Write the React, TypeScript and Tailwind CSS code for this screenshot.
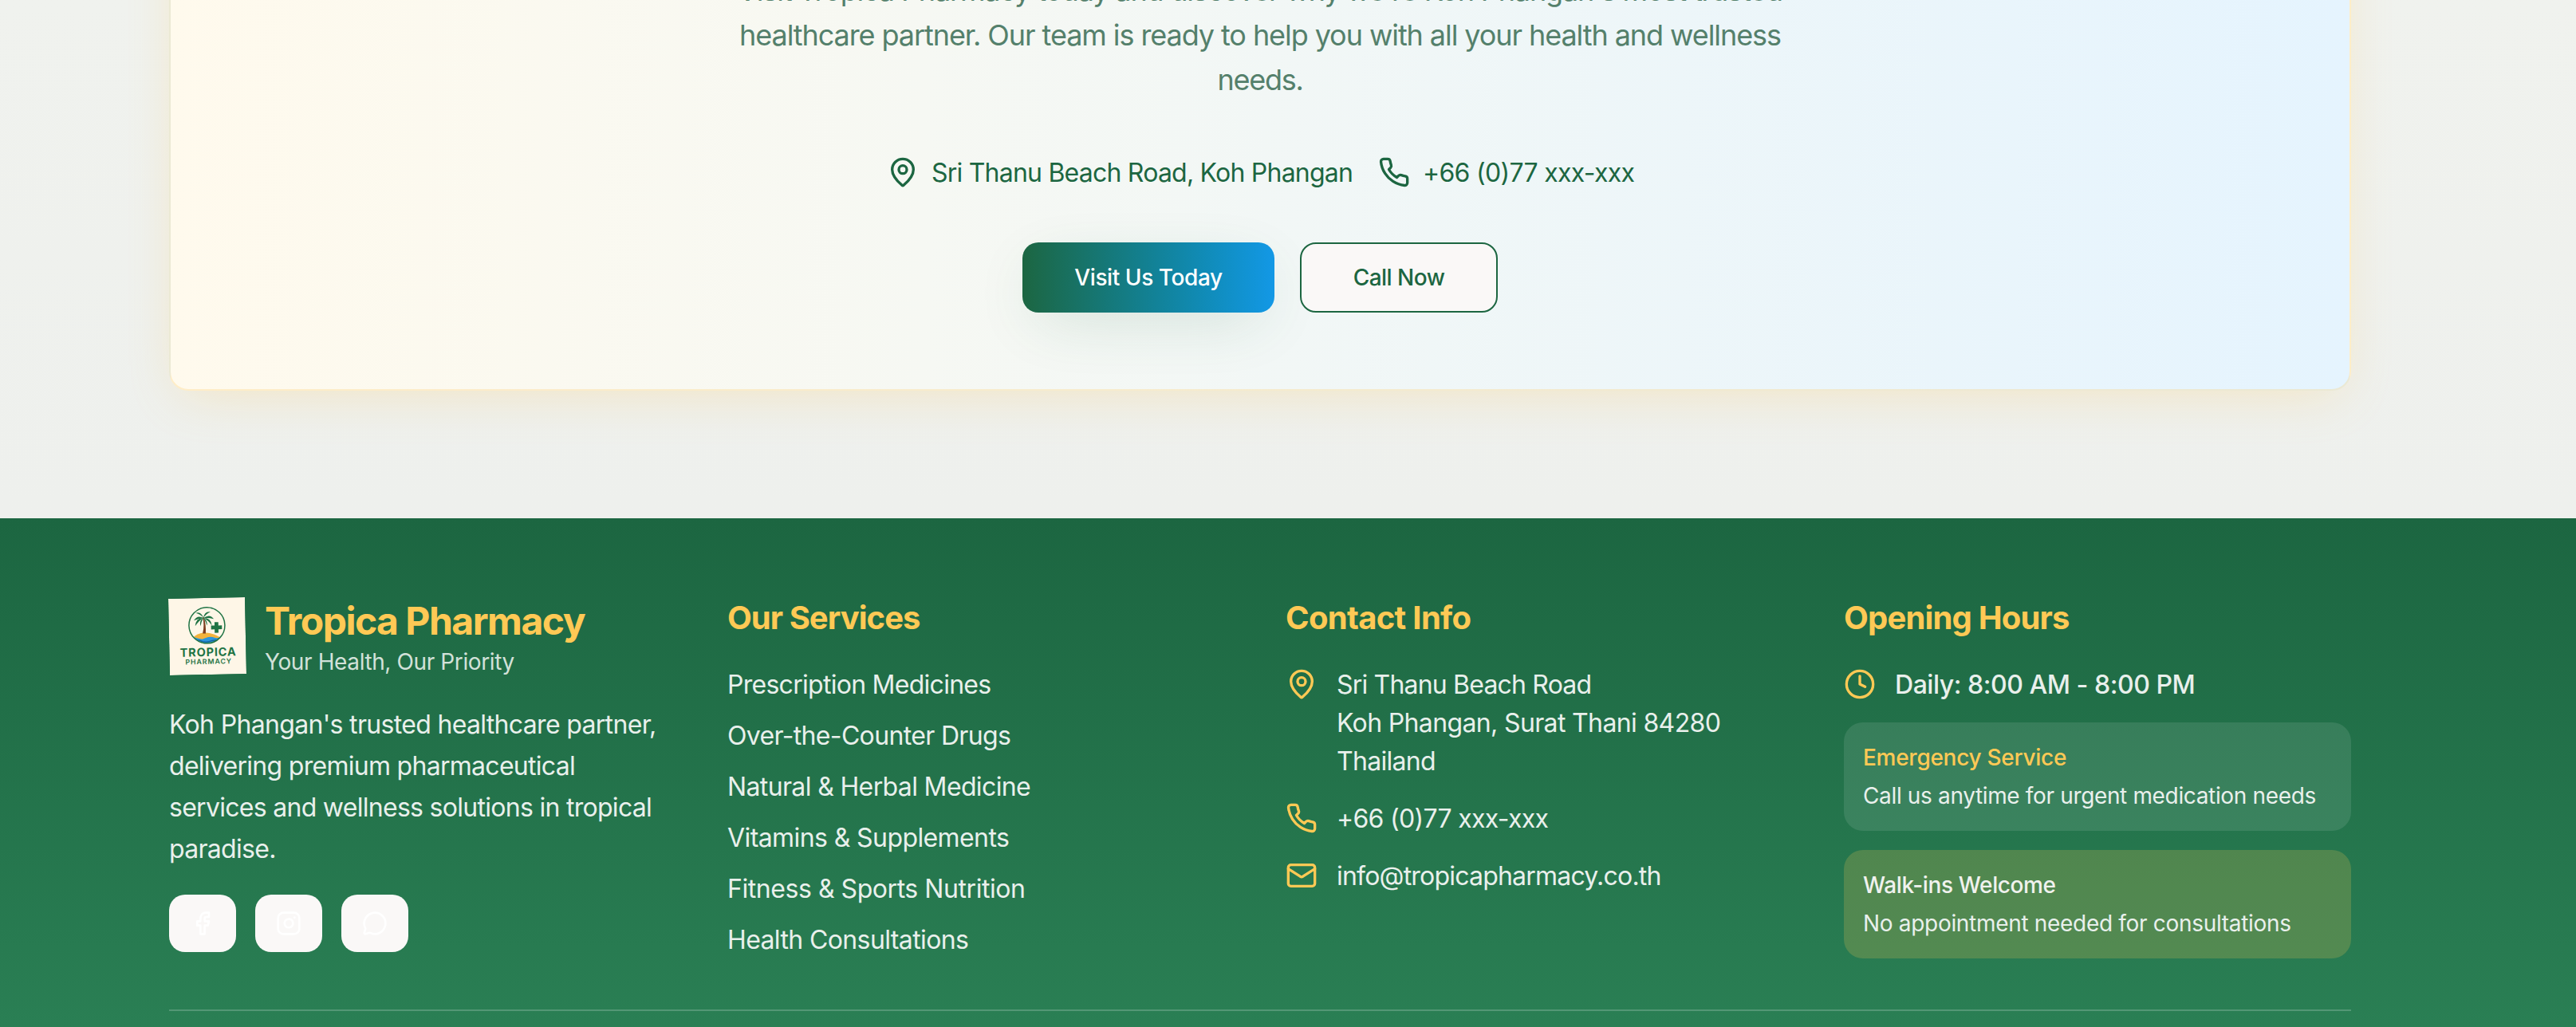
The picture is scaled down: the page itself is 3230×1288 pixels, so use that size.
import type { ReactNode } from "react";
import { Clock, Facebook, Instagram, Mail, MapPin, MessageCircle } from "lucide-react";

function PhoneIcon({ className }: { className: string }) {
  return (
    <svg
      viewBox="0 0 24 24"
      fill="none"
      stroke="currentColor"
      strokeWidth="2"
      strokeLinecap="round"
      strokeLinejoin="round"
      className={className}
    >
      <path d="M22 16.92v3a2 2 0 0 1-2.18 2 19.79 19.79 0 0 1-8.63-3.07 19.5 19.5 0 0 1-6-6 19.79 19.79 0 0 1-3.07-8.67A2 2 0 0 1 4.11 2h3a2 2 0 0 1 2 1.72 12.84 12.84 0 0 0 .7 2.81 2 2 0 0 1-.45 2.11L8.09 9.91a16 16 0 0 0 6 6l1.27-1.27a2 2 0 0 1 2.11-.45 12.84 12.84 0 0 0 2.81.7A2 2 0 0 1 22 16.92z" />
    </svg>
  );
}

function Logo() {
  return (
    <svg viewBox="0 0 96 96" className="size-24 shrink-0 -rotate-[1.2deg]">
      <defs>
        <clipPath id="badge">
          <circle cx="47.7" cy="34.3" r="22" />
        </clipPath>
      </defs>
      <rect width="96" height="96" fill="#fef6e7" />
      <g clipPath="url(#badge)">
        <path d="M30 49 Q37 43 46 43.5 Q56 44.5 63 49 L66 52 H30 Z" fill="#f2b33d" />
        <path d="M24 48.5 Q30 47.5 35 50 Q41 52.5 46 50 Q52 47.5 57 50 Q62 51.5 70 48 V60 H24 Z" fill="#2a95dc" />
        <path d="M29 53.5 Q36 51.5 42 54.5 Q48 56 54 53.5 Q60 52.5 66 53.5" fill="none" stroke="#14639f" strokeWidth="1.4" />
      </g>
      <path d="M42.6 24 Q45 34 42.2 44.5 L46 44.5 Q46.8 33 44 24 Z" fill="#7a3d1e" />
      <g fill="#1f7344">
        <path d="M43.5 25 Q36 20.5 31.5 28 Q37 25.5 43.5 25 Z" />
        <path d="M43.5 25 Q34 24.5 33 35 Q38 28 43.5 25 Z" />
        <path d="M43.5 25 Q37.5 28.5 39.8 35 Q41 29 43.5 25 Z" />
        <path d="M43.5 25 Q41 16.5 34 18.5 Q40 20 43.5 25 Z" />
        <path d="M43.5 25 Q45 16 52.5 17.5 Q47 19.5 43.5 25 Z" />
        <path d="M43.5 25 Q52 19.5 56.5 26.5 Q50 24.5 43.5 25 Z" />
        <path d="M43.5 25 Q53 25 54 34.5 Q49.5 28 43.5 25 Z" />
        <path d="M43.5 25 Q49 28.5 47.8 34.5 Q46.5 29.5 43.5 25 Z" />
        <path d="M57.3 30.5 h4.8 v4.2 h4.4 v4.8 h-4.4 v4.4 h-4.8 v-4.4 h-4.4 v-4.8 h4.4 Z" />
      </g>
      <circle cx="47.7" cy="34.3" r="22.5" fill="none" stroke="#1f7344" strokeWidth="1.5" />
      <text x="13.3" y="73" textLength="70" fontFamily="Inter, sans-serif" fontWeight="700" fontSize="14.5" fill="#1f7344">
        TROPICA
      </text>
      <text x="19.8" y="82.8" textLength="57.5" fontFamily="Inter, sans-serif" fontWeight="600" fontSize="8.8" fill="#1f7344">
        PHARMACY
      </text>
    </svg>
  );
}

function ColumnTitle({ className, children }: { className: string; children: ReactNode }) {
  return (
    <h4 className={`mb-[31px] pt-px text-[40px] leading-[56px] font-bold text-[#ffc955] ${className}`}>{children}</h4>
  );
}

const services = [
  { label: "Prescription Medicines", tracking: "tracking-[-0.723px]" },
  { label: "Over-the-Counter Drugs", tracking: "tracking-[-0.652px]" },
  { label: "Natural & Herbal Medicine", tracking: "tracking-[-0.637px]" },
  { label: "Vitamins & Supplements", tracking: "tracking-[-0.591px]" },
  { label: "Fitness & Sports Nutrition", tracking: "tracking-[-0.447px]" },
  { label: "Health Consultations", tracking: "tracking-[-0.618px]" },
];

const socials = [Facebook, Instagram, MessageCircle];

function CallToAction() {
  return (
    <section className="flex h-[650px] flex-col justify-end bg-linear-to-b from-[#f0f2ee] to-[#eef0ed] pr-[282px] pb-[160px] pl-[212px]">
      <div className="flex h-[640px] shrink-0 flex-col items-center justify-end rounded-3xl border-2 border-[#ffc857]/25 bg-linear-to-r from-[#fffaed] to-[#e5f4fe] pb-24 shadow-[0_16px_64px_-16px_rgba(255,200,87,0.3)]">
        <p className="mb-16 text-center text-[36px] leading-[56px] text-[#54806b]">
          <span className="block tracking-[-1.149px]">
            Visit Tropica Pharmacy today and discover why we're Koh Phangan's most trusted
          </span>
          <span className="block tracking-[-1.079px]">
            healthcare partner. Our team is ready to help you with all your health and wellness
          </span>
          <span className="block tracking-[-1.258px]">needs.</span>
        </p>
        <div className="mb-16 flex w-[936px] items-center justify-between text-[32px] leading-[48px] text-[#1c6641]">
          <div className="flex items-center gap-4">
            <MapPin className="size-10" />
            <span className="-mb-px pt-px tracking-[-0.777px]">Sri Thanu Beach Road, Koh Phangan</span>
          </div>
          <div className="flex w-[320px] items-center gap-4">
            <PhoneIcon className="size-10 shrink-0" />
            <span className="-mb-px pt-px tracking-[-0.704px]">+66 (0)77 xxx-xxx</span>
          </div>
        </div>
        <div className="flex gap-8 text-[28px] font-medium">
          <button className="h-[88px] w-[316px] rounded-[20px] bg-linear-to-r from-[#1c6641] to-[#1398e6] tracking-[-0.422px] text-white shadow-[0_20px_80px_-20px_rgba(28,102,65,0.2)]">
            Visit Us Today
          </button>
          <button className="h-[88px] w-[248px] rounded-[20px] border-2 border-[#1c6641] bg-[#faf8f7] tracking-[-0.519px] text-[#1c6641]">
            Call Now
          </button>
        </div>
      </div>
    </section>
  );
}

function Footer() {
  return (
    <footer className="h-[638px] bg-linear-to-b from-[#1c6641] to-[#2a7f54] pt-24 pr-[282px] pl-[212px] text-[32px] leading-[48px] text-[#e9f0ec]">
      <div className="grid h-[456px] grid-cols-4 gap-16">
        <div>
          <div className="mb-8 flex items-center gap-6">
            <Logo />
            <div>
              <h3 className="-mb-px pt-px text-[48px] leading-[64px] font-bold tracking-[-1.5px] text-[#ffc955]">
                Tropica Pharmacy
              </h3>
              <p className="text-[28px] leading-[40px] tracking-[-0.39px] text-[#d2e1d9]">Your Health, Our Priority</p>
            </div>
          </div>
          <p className="mb-[31px] pt-px leading-[52px]">
            <span className="block tracking-[-0.675px]">Koh Phangan's trusted healthcare partner,</span>
            <span className="block tracking-[-0.711px]">delivering premium pharmaceutical</span>
            <span className="block tracking-[-0.712px]">services and wellness solutions in tropical</span>
            <span className="block tracking-[-0.7px]">paradise.</span>
          </p>
          <div className="flex gap-6">
            {socials.map((Icon, i) => (
              <button key={i} className="flex h-[72px] w-[84px] items-center justify-center rounded-[20px] bg-[#faf8f7] text-white">
                <Icon className="size-8" />
              </button>
            ))}
          </div>
        </div>

        <div>
          <ColumnTitle className="tracking-[-0.964px]">Our Services</ColumnTitle>
          <ul className="flex flex-col gap-4 pt-px">
            {services.map((s) => (
              <li key={s.label} className={s.tracking}>
                {s.label}
              </li>
            ))}
          </ul>
        </div>

        <div>
          <ColumnTitle className="tracking-[-0.676px]">Contact Info</ColumnTitle>
          <div className="flex flex-col gap-6">
            <div className="flex gap-6">
              <MapPin className="mt-1 size-10 text-[#ffc955]" />
              <div className="-mb-px pt-px">
                <span className="block tracking-[-0.809px]">Sri Thanu Beach Road</span>
                <span className="block tracking-[-0.639px]">Koh Phangan, Surat Thani 84280</span>
                <span className="block tracking-[-0.703px]">Thailand</span>
              </div>
            </div>
            <div className="flex items-center gap-6">
              <PhoneIcon className="size-10 text-[#ffc955]" />
              <span className="-mb-px pt-px tracking-[-0.704px]">+66 (0)77 xxx-xxx</span>
            </div>
            <div className="flex items-center gap-6">
              <Mail className="size-10 text-[#ffc955]" />
              <span className="-mb-px pt-px tracking-[-0.795px]">info@tropicapharmacy.co.th</span>
            </div>
          </div>
        </div>

        <div>
          <ColumnTitle className="tracking-[-0.822px]">Opening Hours</ColumnTitle>
          <div className="flex flex-col gap-6">
            <div className="flex items-center gap-6">
              <Clock className="size-10 text-[#ffc955]" />
              <span className="-mb-px pt-px font-medium tracking-[-0.452px]">Daily: 8:00 AM - 8:00 PM</span>
            </div>
            <div className="flex flex-col gap-2 rounded-3xl bg-white/10 p-6 text-[28px] leading-[40px]">
              <p className="font-medium tracking-[-0.278px] text-[#ffc955]">Emergency Service</p>
              <p className="tracking-[-0.352px]">Call us anytime for urgent medication needs</p>
            </div>
            <div className="flex flex-col gap-2 rounded-3xl bg-[#ffc857]/20 p-6 text-[28px] leading-[40px]">
              <p className="font-medium tracking-[-0.382px] text-[#f0f2ee]">Walk-ins Welcome</p>
              <p className="tracking-[-0.309px]">No appointment needed for consultations</p>
            </div>
          </div>
        </div>
      </div>
      <div className="mt-16 border-t-2 border-white/20" />
    </footer>
  );
}

export default function App() {
  return (
    <main className="h-[1288px] w-[3230px] overflow-hidden font-['Inter',sans-serif] whitespace-nowrap">
      <CallToAction />
      <Footer />
    </main>
  );
}
